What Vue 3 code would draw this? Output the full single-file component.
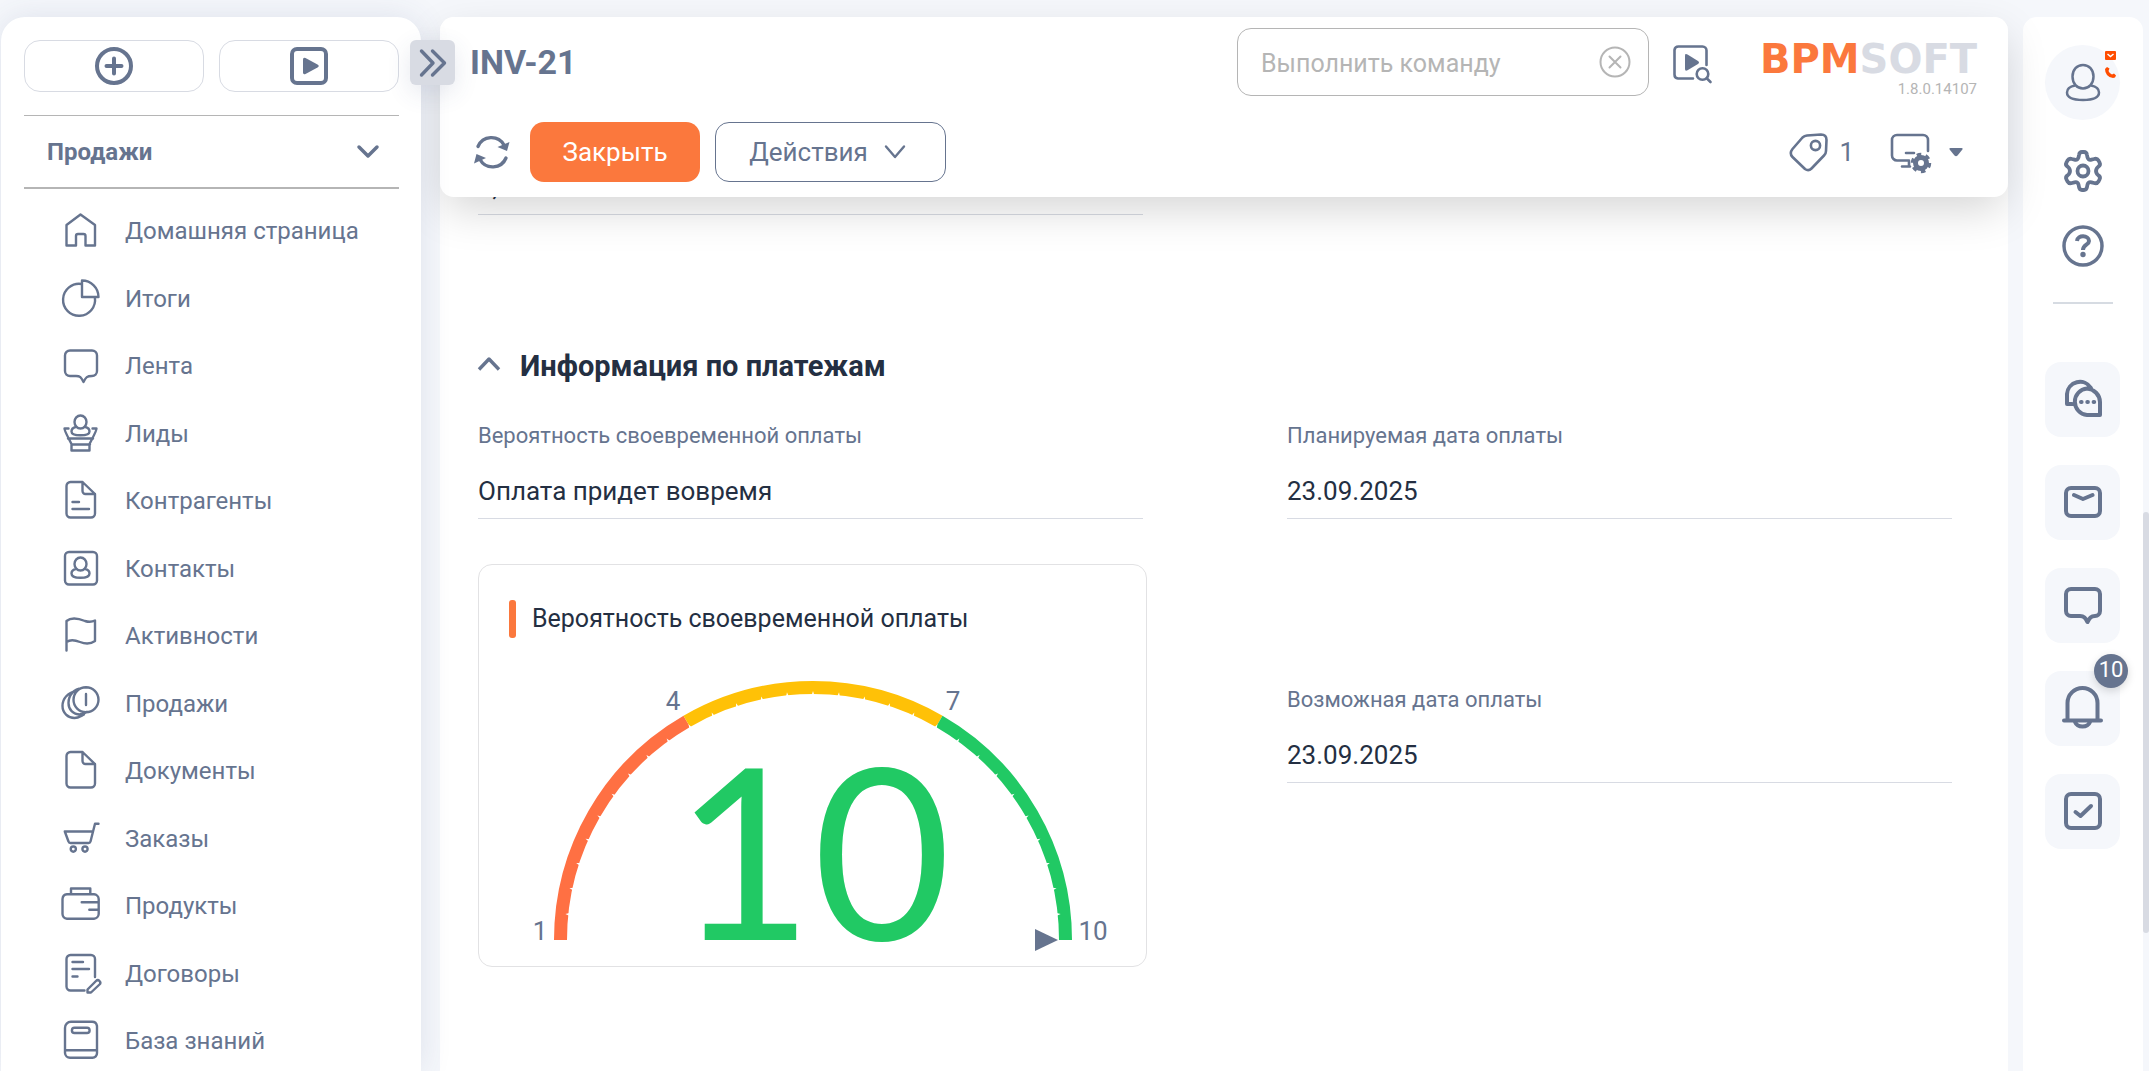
<script setup>
import { ref } from 'vue'

const docPath = 'M10.5 2H22.5L35 14V33.5A4 4 0 0 1 31 37.5H10.5A4 4 0 0 1 6.5 33.5V6A4 4 0 0 1 10.5 2ZM22.5 2V11A3 3 0 0 0 25.5 14H35'

const sections = [
  { label: 'Домашняя страница', d: 'M6.5 15L20.5 4.5L35 15V35.5H25.5V26A2 2 0 0 0 23.5 24H18A2 2 0 0 0 16 26V35.5H6.5Z' },
  { label: 'Итоги', d: 'M22 2.5V19H38.5A16.5 16.5 0 0 0 22 2.5ZM21.5 6A16 16 0 1 0 34.9 19.5' },
  { label: 'Лента', d: 'M10 5.5H32A5 5 0 0 1 37 10.5V26A5 5 0 0 1 32 31C27 31 26 32 23.5 37C21 32 20 31 16 31H10A5 5 0 0 1 5 26V10.5A5 5 0 0 1 10 5.5Z' },
  { label: 'Лиды', d: 'M20.5 2.5A6 6.5 0 0 1 20.5 15.5A6 6.5 0 0 1 20.5 2.5ZM15.5 14C12 15 11.5 17 11.5 18.5C11.5 21.5 15 22.3 20.5 22.3S29.5 21.5 29.5 18.5C29.5 17 29 15 25.5 14M8.5 15.5H4.5C4 17 8 24 11.5 31V37.5H29.5V31C33 24 37 17 36.5 15.5H32.5M8 25.5H33M11.5 31.5H30' },
  { label: 'Контрагенты', d: docPath + 'M12.5 22H19M12.5 29H29' },
  { label: 'Контакты', d: 'M9 4H33A4 4 0 0 1 37 8V32.5A4 4 0 0 1 33 36.5H9A4 4 0 0 1 5 32.5V8A4 4 0 0 1 9 4ZM20.5 9.5A6 6.5 0 0 1 20.5 22.5A6 6.5 0 0 1 20.5 9.5ZM15.5 21C12.5 22 11.5 24 11.5 25.5C11.5 28.7 15 29.8 20.5 29.8S29.5 28.7 29.5 25.5C29.5 24 28.5 22 25.5 21' },
  { label: 'Активности', d: 'M6.5 35.5V6C12 1.5 20 4 25 6C29 7.3 33 6.5 35 5.5V26C30 29.5 24 28.5 20 27C15 25 10 24.5 6.5 27' },
  { label: 'Продажи', d: 'M26 4.3A12.5 12.5 0 0 1 26 29.3A12.5 12.5 0 0 1 26 4.3ZM26 11V22M22 5C14 6 8.5 12 8.5 20C8.5 26.5 13 31.5 20 31.5L27 29M16 8C8 10 2.5 15.5 2.5 23C2.5 30 8 35 14.5 35C18 35 20 33.5 24 31.5' },
  { label: 'Документы', d: docPath },
  { label: 'Заказы', d: 'M38.5 5.8H35L30.5 23.5A2 2 0 0 1 28.5 25H10.5A2 2 0 0 1 8.5 23.5L4.8 13.5H32.5M13.3 28.5A2.6 2.6 0 0 1 13.3 33.7A2.6 2.6 0 0 1 13.3 28.5ZM25 28.5A2.6 2.6 0 0 1 25 33.7A2.6 2.6 0 0 1 25 28.5Z' },
  { label: 'Продукты', d: 'M7 9.3H34A5 5 0 0 1 38.7 14V29A5 5 0 0 1 34 33.7H7A5 5 0 0 1 2.5 29V14A5 5 0 0 1 7 9.3ZM11 9V3.5H30.3V9M21.7 17.3H38.5M29.3 24.7H38.5' },
  { label: 'Договоры', d: 'M24.5 37.5H10.5A4 4 0 0 1 6.5 33.5V6A4 4 0 0 1 10.5 2H31A4 4 0 0 1 35 6V24M12.5 9H23M12.5 16H29M12.5 23.5H17.5M27.5 39.5L27.5 36.5L36 28A2.3 2.3 0 0 1 39.5 31.5L31 39.5Z' },
  { label: 'База знаний', d: 'M11 1.8H32A5 5 0 0 1 37 6V33A4.5 4.5 0 0 1 32.5 37.7H10A5 5 0 0 1 5 33V8A6 6 0 0 1 11 1.8ZM5 30.2H37M14.5 7.8H27A2.6 2.6 0 0 1 27 13H14.5A2.6 2.6 0 0 1 14.5 7.8Z' },
]

const tools = [
  { label: 'Чаты', d: 'M6 25V15A13 13 0 0 1 30 9M6 25H11M26 9.5A14 14 0 0 1 39 23V36H26A13.3 13.3 0 0 1 26 9.5ZM20 23h.6M26.3 23h.6M32.6 23h.6' },
  { label: 'Почта', d: 'M10 6H34A5 5 0 0 1 39 11V29A5 5 0 0 1 34 34H10A5 5 0 0 1 5 29V11A5 5 0 0 1 10 6ZM13 13L22 17L31.5 13' },
  { label: 'Сообщения', d: 'M10 4H34A5 5 0 0 1 39 9V26A5 5 0 0 1 34 31C30 31 28.5 33 26.5 37C24.5 33 23 31 19 31H10A5 5 0 0 1 5 26V9A5 5 0 0 1 10 4Z' },
  { label: 'Уведомления', d: 'M6.500 31V15A13.500 13.500 0 0 1 36.500 15V31M3 32.500H40M14 34C16.500 40 26.500 40 29 34', count: 10 },
  { label: 'Задачи', d: 'M10 3H34A5 5 0 0 1 39 8V32A5 5 0 0 1 34 37H10A5 5 0 0 1 5 32V8A5 5 0 0 1 10 3ZM14.5 21L19.5 25L30 15' },
]

const command = ref('')

// Gauge geometry: half circle, scale 1..10
const cx = 334
const cy = 302
const point = (angle, r) => {
  const a = (angle * Math.PI) / 180
  return `${(cx + r * Math.cos(a)).toFixed(2)} ${(cy - r * Math.sin(a)).toFixed(2)}`
}
const arc = (from, to) => `M${point(from, 252.5)}A252.5 252.5 0 0 1 ${point(to, 252.5)}`
const zones = [
  { color: '#ff7043', d: arc(180, 120) },
  { color: '#ffc107', d: arc(120, 60) },
  { color: '#21c964', d: arc(60, 0) },
]
// Small wedge notches along the inner edge of the arc
const ticks = Array.from({ length: 29 }, (_, i) => (i + 1) * 6)
  .map((a) => `M${point(a - 0.3, 245)}L${point(a, 249)}L${point(a + 0.3, 245)}Z`)
  .join('')
</script>

<template>
  <div class="app">
    <aside class="sidebar">
      <div class="quick">
        <button type="button" aria-label="Создать">
          <svg width="38" height="38" viewBox="0 0 38 38" fill="none" stroke="currentColor" stroke-width="4" stroke-linecap="round"><circle cx="19" cy="19" r="17" /><path d="M19 11.5V26.5M11.5 19H26.5" /></svg>
        </button>
        <button type="button" aria-label="Запустить процесс">
          <svg width="38" height="38" viewBox="0 0 38 38"><rect x="2" y="2" width="34" height="34" rx="5" fill="none" stroke="currentColor" stroke-width="4" /><path d="M13 12.5V25.5Q13 28 15.5 27L27.5 20.5Q30 19 27.5 17.5L15.5 11Q13 10 13 12.5Z" fill="currentColor" /></svg>
        </button>
      </div>
      <button type="button" class="workplace">
        <span>Продажи</span>
        <svg width="22" height="14" viewBox="0 0 22 14" fill="none" stroke="currentColor" stroke-width="3.5" stroke-linecap="round" stroke-linejoin="round"><path d="M2 2L11 11L20 2" /></svg>
      </button>
      <nav>
        <ul>
          <li v-for="s in sections" :key="s.label">
            <a href="#">
              <svg width="40" height="40" viewBox="0 0 40 40" fill="none" stroke="currentColor" stroke-width="2.4" stroke-linecap="round" stroke-linejoin="round"><path :d="s.d" /></svg>
              <span>{{ s.label }}</span>
            </a>
          </li>
        </ul>
      </nav>
      <button type="button" class="toggle" aria-label="Развернуть панель">
        <svg width="28" height="28" viewBox="0 0 28 28" fill="none" stroke="currentColor" stroke-width="3.4" stroke-linecap="round" stroke-linejoin="round"><path d="M2.5 2L14 14L2.5 26M13.5 2L25.5 14L13.5 26" /></svg>
      </button>
    </aside>

    <main class="main">
      <header class="header">
        <div class="top">
          <h1>INV-21</h1>
          <div class="command">
            <input v-model="command" type="text" placeholder="Выполнить команду" aria-label="Выполнить команду" />
            <button type="button" aria-label="Очистить">
              <svg width="32" height="32" viewBox="0 0 32 32" fill="none" stroke="currentColor" stroke-width="2" stroke-linecap="round"><circle cx="16" cy="16" r="14.5" /><path d="M10.5 10.5L21.5 21.5M21.5 10.5L10.5 21.5" /></svg>
            </button>
          </div>
          <button type="button" class="icon run" aria-label="Найти процесс">
            <svg width="38" height="38" viewBox="0 0 38 38" fill="none" stroke="currentColor" stroke-width="2.6" stroke-linecap="round"><path d="M20 33.5H5A4 4 0 0 1 1.5 29.500V5A4 4 0 0 1 5.5 1.500H29.500A4 4 0 0 1 33.500 5.500V20" /><path d="M12 10.5V24Q12 26.5 14.5 25.300L25 19Q27 17.500 25 16L14.5 9.500Q12 8.200 12 10.5Z" fill="currentColor" stroke="none" /><circle cx="29.500" cy="29" r="5.8" /><path d="M33.700 33.300L37.500 37" /></svg>
          </button>
          <div class="brand">
            <div class="logo"><b>BPM</b><span>SOFT</span></div>
            <div class="version">1.8.0.14107</div>
          </div>
        </div>
        <div class="toolbar">
          <button type="button" class="icon refresh" aria-label="Обновить">
            <svg width="38" height="38" viewBox="0 0 38 38" fill="none" stroke="currentColor" stroke-width="3.4" stroke-linecap="round"><path d="M5 13.500A14.5 14.5 0 0 1 31 12M33 25A14.5 14.5 0 0 1 7 26.5" /><path d="M36.500 9L34 18L24.500 14ZM1 30.500L3.500 21L13 25Z" fill="currentColor" stroke="none" /></svg>
          </button>
          <button type="button" class="btn primary">Закрыть</button>
          <button type="button" class="btn outline">
            Действия
            <svg width="22" height="14" viewBox="0 0 22 14" fill="none" stroke="currentColor" stroke-width="2.4" stroke-linecap="round" stroke-linejoin="round"><path d="M2 1.500L11 12L20 1.500" /></svg>
          </button>
          <div class="spacer"></div>
          <button type="button" class="icon tag">
            <svg width="40" height="40" viewBox="0 0 40 40" fill="none" stroke="currentColor" stroke-width="2.6" stroke-linejoin="round"><path d="M18 3.5L32 2.5Q37.5 2.5 37.5 8L37 19Q37 21.5 35 23.5L22.500 36.5Q19.500 39.500 16 37L3.500 25Q0 21.500 3.500 17L13.5 5.5Q15.5 3.7 18 3.5Z" /><circle cx="26.5" cy="13.5" r="4.6" /></svg>
            <span>1</span>
          </button>
          <button type="button" class="icon view" aria-label="Вид">
            <svg width="42" height="40" viewBox="0 0 42 40" fill="none" stroke="currentColor" stroke-width="2.6" stroke-linecap="round"><path d="M19 28.500H7A5 5 0 0 1 2 23.5V8A5 5 0 0 1 7 3H33A5 5 0 0 1 38 8V19M16 21H24M12 34.5H20M19 29V34" /><circle cx="31" cy="31" r="5.5" stroke-width="5" /><circle cx="31" cy="31" r="8.5" stroke-width="3.5" stroke-dasharray="4.45 4.45" stroke-linecap="butt" /></svg>
            <svg width="14" height="10" viewBox="0 0 14 10"><path d="M1.5 1H12.5Q14.5 1 13 3L8.5 8.5Q7 10 5.5 8.5L1 3Q-.5 1 1.5 1Z" fill="currentColor" /></svg>
          </button>
        </div>
      </header>

      <div class="content">
        <div class="cols">
          <div class="field">
            <input type="text" value="0,00" aria-label="Сумма" readonly />
          </div>
        </div>

        <section>
          <h2>
            <button type="button" class="icon" aria-label="Свернуть">
              <svg width="22" height="18" viewBox="0 0 22 18" fill="none" stroke="currentColor" stroke-width="3.4" stroke-linejoin="round"><path d="M1 12.5L11 2L21 12.5" /></svg>
            </button>
            Информация по платежам
          </h2>
          <div class="cols">
            <div class="col left">
              <div class="field">
                <label for="chance">Вероятность своевременной оплаты</label>
                <input id="chance" type="text" value="Оплата придет вовремя" readonly />
              </div>
              <article class="card">
                <h3>Вероятность своевременной оплаты</h3>
                <svg class="gauge" viewBox="0 0 667 328">
                  <path v-for="z in zones" :key="z.color" :d="z.d" :stroke="z.color" fill="none" stroke-width="13" />
                  <path :d="ticks" fill="#fff" />
                  <g class="marks">
                    <text x="61" y="302" text-anchor="middle">1</text>
                    <text x="194" y="72" text-anchor="middle">4</text>
                    <text x="474" y="72" text-anchor="middle">7</text>
                    <text x="614" y="302" text-anchor="middle">10</text>
                  </g>
                  <text class="score" x="334" y="302" text-anchor="middle">10</text>
                  <path d="M556 291V313L579 302Z" fill="#66748f" />
                </svg>
              </article>
            </div>
            <div class="col right">
              <div class="field">
                <label for="planned">Планируемая дата оплаты</label>
                <input id="planned" type="text" value="23.09.2025" readonly />
              </div>
              <div class="field">
                <label for="possible">Возможная дата оплаты</label>
                <input id="possible" type="text" value="23.09.2025" readonly />
              </div>
            </div>
          </div>
        </section>
      </div>
    </main>

    <aside class="rail">
      <button type="button" class="avatar" aria-label="Профиль">
        <svg width="36" height="40" viewBox="0 0 36 40" fill="none" stroke="currentColor" stroke-width="2.5"><path d="M18 2C24 2 28.5 6.5 28.5 13.5S24 25.5 18 25.5S7.5 20.5 7.5 13.5S12 2 18 2Z" /><path d="M10 22.5C4.5 23.5 2 26 2 29.5C2 35 7 37 18 37S34 35 34 29.5C34 26 31.5 23.5 26 22.5" /></svg>
        <span class="status">
          <svg width="11" height="9" viewBox="0 0 11 9"><rect width="11" height="9" rx="1" fill="#ff4d00" /><path d="M2.5 3L5.5 5.5L8.5 3" fill="none" stroke="#fff" stroke-width="1.5" /></svg>
          <svg width="11" height="11" viewBox="0 0 11 11"><path d="M0 2L2 0L4.5 1.5L3.5 4Q4.5 6.5 7 7.5L9 6.5L11 8.5Q10.5 11 8 11Q0 9.5 0 2Z" fill="#ff4d00" /></svg>
        </span>
      </button>
      <button type="button" class="icon" aria-label="Настройки">
        <svg width="42" height="42" viewBox="0 0 42 42" fill="none" stroke="currentColor" stroke-width="3.8" stroke-linejoin="round"><path d="M17 5Q17.500 2 20 2H22Q24.500 2 25 5L25.500 7.500Q26.500 10.500 29.500 9.700L32 9Q35 8 36.500 10.500L37.500 12.500Q39 15 36.500 16.500L35 18Q33 21 35 24L36.500 25.500Q39 27 37.500 29.500L36.500 31.500Q35 34 32 33L29.500 32.300Q26.500 31.500 25.500 34.500L25 37Q24.500 40 22 40H20Q17.500 40 17 37L16.500 34.500Q15.500 31.500 12.500 32.300L10 33Q7 34 5.500 31.500L4.500 29.500Q3 27 5.500 25.500L7 24Q9 21 7 18L5.500 16.500Q3 15 4.500 12.500L5.500 10.500Q7 8 10 9L12.500 9.700Q15.500 10.500 16.500 7.500Z" /><circle cx="21" cy="21" r="5.5" /></svg>
      </button>
      <button type="button" class="icon help" aria-label="Справка">
        <svg width="42" height="42" viewBox="0 0 42 42" fill="none" stroke="currentColor"><circle cx="21" cy="21" r="19" stroke-width="3.5" /><path d="M15 16C15.500 9.500 27 10 27 16C27 20 21 19.500 21 25" stroke-width="4" /><circle cx="21" cy="29.5" r="2.7" fill="currentColor" stroke="none" /></svg>
      </button>
      <hr />
      <div class="tiles">
        <button v-for="t in tools" :key="t.label" type="button" class="tile" :aria-label="t.label">
          <svg width="44" height="42" viewBox="0 0 44 42" fill="none" stroke="currentColor" stroke-width="4" stroke-linecap="round" stroke-linejoin="round"><path :d="t.d" /></svg>
          <span v-if="t.count" class="badge">{{ t.count }}</span>
        </button>
      </div>
    </aside>
    <div class="scroll"><i></i></div>
  </div>
</template>

<style>
body {
  background: #f5f7fb;
}
</style>

<style scoped>
* {
  box-sizing: border-box;
}
.app {
  display: flex;
  height: 100vh;
  padding: 17px 0 0 1px;
  overflow: hidden;
  background: #f5f7fb;
  color: #66748f;
  font-family: Roboto, "Noto Sans", sans-serif;
  font-size: 24px;
}
button {
  padding: 0;
  border: 0;
  background: none;
  color: inherit;
  font: inherit;
}
svg {
  display: block;
  flex: none;
  overflow: visible;
}
.icon {
  display: flex;
  align-items: center;
}

/* left navigation */
.sidebar {
  position: relative;
  z-index: 3;
  flex: none;
  width: 420px;
  padding: 23px 22px 0 23px;
  border-radius: 24px 24px 0 0;
  background: #fff;
  box-shadow: 0 0 32px rgba(60, 70, 120, 0.12);
}
.quick {
  display: flex;
  gap: 15px;
  padding-bottom: 23px;
}
.quick button {
  display: flex;
  flex: 1;
  align-items: center;
  justify-content: center;
  height: 52px;
  border: 1px solid #d8dbe3;
  border-radius: 16px;
}
.workplace {
  display: flex;
  align-items: center;
  justify-content: space-between;
  width: 100%;
  height: 74px;
  padding: 0 20px 0 23px;
  border-top: 1px solid #b5b5b5;
  border-bottom: 2px solid #b5b5b5;
  font-weight: 700;
}
nav ul {
  margin: 7px 0 0;
  padding: 0;
  list-style: none;
}
nav li {
  height: 68px;
}
nav li:nth-child(even) {
  height: 67px;
}
nav a {
  display: flex;
  align-items: center;
  gap: 25px;
  height: 100%;
  padding-left: 36px;
  color: inherit;
  text-decoration: none;
}
nav span {
  padding-top: 2px;
}
.toggle {
  position: absolute;
  top: 23px;
  right: -34px;
  display: flex;
  align-items: center;
  justify-content: center;
  width: 45px;
  height: 45px;
  border-radius: 6px;
  background: #d8dbe3;
  box-shadow: 0 8px 24px rgba(60, 70, 120, 0.12);
}

/* record page */
.main {
  display: flex;
  flex: 1;
  flex-direction: column;
  min-width: 0;
  margin: 0 15px 0 19px;
  border-radius: 14px 14px 0 0;
  background: #fff;
}
.header {
  position: relative;
  z-index: 2;
  flex: none;
  padding-bottom: 15px;
  border-radius: 14px;
  background: #fff;
  box-shadow: 0 16px 44px -4px rgba(0, 0, 0, 0.17);
}
.top {
  display: flex;
  align-items: center;
  height: 90px;
  padding: 0 31px 0 30px;
}
h1 {
  flex: 1;
  margin: 0;
  font-size: 34px;
  line-height: 40px;
}
.command {
  display: flex;
  align-items: center;
  width: 412px;
  height: 68px;
  padding: 0 17px 0 23px;
  border: 1px solid #b5b5b5;
  border-radius: 14px;
  color: #b5b5b5;
}
.command input {
  flex: 1;
  min-width: 0;
  padding: 2px 0 0;
  border: 0;
  outline: 0;
  background: none;
  color: #66748f;
  font: inherit;
  font-size: 25px;
}
.command input::placeholder {
  color: #b5b5b5;
  opacity: 1;
}
.run {
  margin: 3px 40px 0 24px;
}
.brand {
  width: 226px;
  padding-top: 21px;
  text-align: right;
}
.logo {
  color: #d8dbe3;
  font-family: "DejaVu Sans", sans-serif;
  font-size: 40px;
  font-weight: 700;
  line-height: 32px;
  white-space: nowrap;
}
.logo b {
  color: #fb783d;
}
.version {
  color: #b5b5b5;
  font-size: 15px;
  line-height: 28px;
}
.toolbar {
  display: flex;
  align-items: center;
  height: 75px;
  padding: 15px 45px 0 33px;
  font-size: 26px;
}
.refresh {
  margin-right: 19px;
}
.btn {
  display: flex;
  align-items: center;
  justify-content: center;
  height: 60px;
  border-radius: 14px;
}
.primary {
  width: 170px;
  margin-right: 15px;
  background: #fb783d;
  color: #fff;
}
.outline {
  gap: 16px;
  width: 231px;
  padding-right: 6px;
  border: 1px solid #66748f;
}
.spacer {
  flex: 1;
}
.tag {
  gap: 10px;
  margin-right: 36px;
}
.view {
  gap: 17px;
}
.content {
  flex: 1;
  min-height: 0;
  margin-top: -37px;
  padding: 0 56px 0 38px;
  overflow: hidden;
}
.cols {
  display: grid;
  grid-template-columns: 1fr 1fr;
  gap: 144px;
}
.col {
  display: flex;
  flex-direction: column;
}
.left {
  gap: 45px;
}
.right {
  gap: 165px;
}
.field {
  display: flex;
  flex-direction: column;
  gap: 13px;
}
.field label {
  padding-top: 1px;
  font-size: 22px;
  line-height: 30px;
}
.field input {
  width: 100%;
  height: 55px;
  padding: 0;
  border: 0;
  border-bottom: 1px solid #d8dbe3;
  border-radius: 0;
  outline: 0;
  background: none;
  color: #242f42;
  font: inherit;
  font-size: 26px;
}
h2 {
  display: flex;
  align-items: center;
  gap: 20px;
  margin: 131px 0 34px;
  color: #242f42;
  font-size: 29px;
  line-height: 40px;
}
h2 .icon {
  color: #66748f;
}
.card {
  margin-right: -4px;
  padding-top: 35px;
  border: 1px solid #e2e2e4;
  border-radius: 14px;
}
h3 {
  display: flex;
  align-items: center;
  gap: 16px;
  margin: 0 0 0 30px;
  color: #242f42;
  font-size: 25px;
  font-weight: 400;
  line-height: 38px;
}
h3::before {
  width: 7px;
  height: 38px;
  border-radius: 3px;
  background: #fb783d;
  content: "";
}
.gauge {
  width: 100%;
}
.marks {
  fill: #66748f;
  font-size: 26px;
}
.score {
  fill: #21c964;
  font-family: Lato, sans-serif;
  font-size: 238px;
}

/* right rail */
.rail {
  display: flex;
  flex: none;
  flex-direction: column;
  align-items: center;
  width: 120px;
  padding: 28px 1px 0 0;
  border-radius: 14px 14px 0 0;
  background: #fff;
}
.avatar {
  position: relative;
  display: flex;
  align-items: center;
  justify-content: center;
  width: 75px;
  height: 75px;
  margin-bottom: 30px;
  border-radius: 50%;
  background: #f5f7fb;
}
.status {
  position: absolute;
  top: 6px;
  right: 4px;
  display: flex;
  flex-direction: column;
  gap: 7px;
}
.help {
  margin-top: 33px;
}
hr {
  width: 60px;
  height: 2px;
  margin: 35px 0 58px;
  border: 0;
  background: #d6dbe2;
}
.tiles {
  display: flex;
  flex-direction: column;
  gap: 28px;
}
.tile {
  position: relative;
  display: flex;
  align-items: center;
  justify-content: center;
  width: 75px;
  height: 75px;
  border-radius: 16px;
  background: #f5f7fb;
}
.badge {
  position: absolute;
  top: -17px;
  right: -8px;
  width: 34px;
  height: 34px;
  border-radius: 50%;
  background: #66748f;
  box-shadow: 0 3px 8px rgba(0, 0, 0, 0.15);
  color: #fff;
  font-size: 22px;
  line-height: 32px;
  text-align: center;
}
.scroll {
  display: flex;
  flex: none;
  flex-direction: column;
  width: 6px;
  padding-top: 495px;
}
.scroll i {
  height: 421px;
  border-radius: 4px;
  background: #d8dbe3;
}
</style>
